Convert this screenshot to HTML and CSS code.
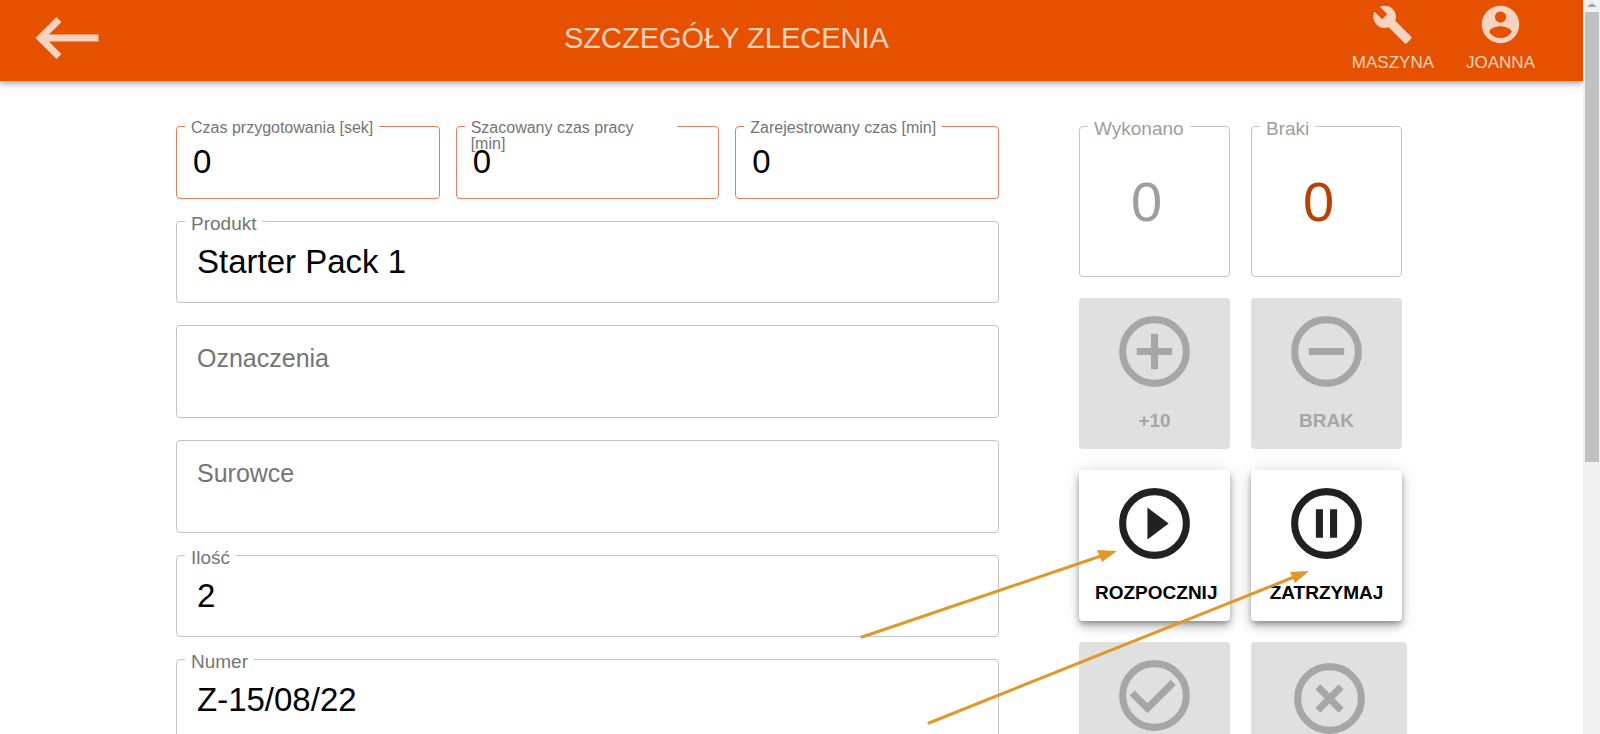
FILE: index.html
```html
<!DOCTYPE html>
<html lang="pl">
<head>
    <meta charset="UTF-8">
    <meta name="viewport" content="width=device-width, initial-scale=1.0">
    <title>Szczegóły zlecenia</title>
    <link rel="stylesheet" href="styles.css">
</head>
<body>
    <div class="window">
        <div class="page">
            <header class="topbar">
                <button type="button" class="back-button" aria-label="Wstecz">
                    <svg class="back-icon" viewBox="0 0 24 24"><path d="M21 11H6.83l3.58-3.59L9 6l-6 6 6 6 1.41-1.41L6.83 13H21z"/></svg>
                </button>
                <h1 class="title">Szczegóły zlecenia</h1>
                <nav class="topbar-actions">
                    <button type="button" class="topbar-button">
                        <svg class="topbar-icon" viewBox="-1 -1 26 26"><path d="M22.7 19l-9.1-9.1c.9-2.3.4-5-1.5-6.9-2-2-5-2.4-7.4-1.3L9 6 6 9 1.6 4.7C.4 7.1.9 10.1 2.9 12.1c1.9 1.9 4.6 2.4 6.9 1.5l9.1 9.1c.4.4 1 .4 1.4 0l2.3-2.3c.5-.4.5-1.1.1-1.4z"/></svg>
                        Maszyna
                    </button>
                    <button type="button" class="topbar-button">
                        <svg class="topbar-icon" viewBox="0 0 24 24"><path fill-rule="evenodd" d="M12 2a10 10 0 1 0 0 20 10 10 0 0 0 0-20zm0 3a3 3 0 1 1 0 6 3 3 0 0 1 0-6zm0 14.2a7.2 7.2 0 0 1-6-3.22c.03-1.99 4-3.08 6-3.08s5.97 1.09 6 3.08a7.2 7.2 0 0 1-6 3.22z"/></svg>
                        Joanna
                    </button>
                </nav>
            </header>

            <main class="order">
                <form class="details">
                    <div class="times">
                        <div class="field field-time">
                            <label for="prepTime">Czas przygotowania [sek]</label>
                            <input type="text" id="prepTime" value="0" readonly>
                        </div>
                        <div class="field field-time">
                            <label for="estimatedTime">Szacowany czas pracy [min]</label>
                            <input type="text" id="estimatedTime" value="0" readonly>
                        </div>
                        <div class="field field-time">
                            <label for="registeredTime">Zarejestrowany czas [min]</label>
                            <input type="text" id="registeredTime" value="0" readonly>
                        </div>
                    </div>
                    <div class="field">
                        <label for="product">Produkt</label>
                        <input type="text" id="product" value="Starter Pack 1" readonly>
                    </div>
                    <div class="field field-empty">
                        <label for="marks">Oznaczenia</label>
                        <textarea id="marks" readonly></textarea>
                    </div>
                    <div class="field field-empty">
                        <label for="materials">Surowce</label>
                        <textarea id="materials" readonly></textarea>
                    </div>
                    <div class="field">
                        <label for="amount">Ilość</label>
                        <input type="text" id="amount" value="2" readonly>
                    </div>
                    <div class="field">
                        <label for="number">Numer</label>
                        <input type="text" id="number" value="Z-15/08/22" readonly>
                    </div>
                </form>

                <section class="controls">
                    <div class="field field-count">
                        <label for="done">Wykonano</label>
                        <input type="text" id="done" value="0" disabled>
                    </div>
                    <div class="field field-count field-missing">
                        <label for="missing">Braki</label>
                        <input type="text" id="missing" value="0" disabled>
                    </div>

                    <button type="button" class="tile" disabled>
                        <svg class="tile-icon" viewBox="0 0 24 24"><circle class="ring" cx="12" cy="12" r="9"/><path d="M13 7h-2v4H7v2h4v4h2v-4h4v-2h-4z"/></svg>
                        <span class="tile-label">+10</span>
                    </button>
                    <button type="button" class="tile" disabled>
                        <svg class="tile-icon" viewBox="0 0 24 24"><circle class="ring" cx="12" cy="12" r="9"/><path d="M7 11v2h10v-2z"/></svg>
                        <span class="tile-label">Brak</span>
                    </button>

                    <button type="button" class="tile">
                        <svg class="tile-icon" viewBox="0 0 24 24"><circle class="ring" cx="12" cy="12" r="9"/><path d="M10 16.5l6-4.5-6-4.5z"/></svg>
                        <span class="tile-label">Rozpocznij</span>
                    </button>
                    <button type="button" class="tile">
                        <svg class="tile-icon" viewBox="0 0 24 24"><circle class="ring" cx="12" cy="12" r="9"/><path d="M9 16h2V8H9zm4-8v8h2V8z"/></svg>
                        <span class="tile-label">Zatrzymaj</span>
                    </button>

                    <button type="button" class="tile" aria-label="Zakończ" disabled>
                        <svg class="tile-icon" viewBox="0 0 24 24"><circle class="ring" cx="12" cy="12" r="9"/><path d="M16.59 7.58L10 14.17l-3.59-3.58L5 12l5 5 8-8z"/></svg>
                        <span class="tile-label"></span>
                    </button>
                    <button type="button" class="tile tile-large" aria-label="Anuluj" disabled>
                        <svg class="tile-icon" viewBox="0 0 24 24"><circle class="ring" cx="12" cy="12" r="9"/><path d="M14.59 8L12 10.59 9.41 8 8 9.41 10.59 12 8 14.59 9.41 16 12 13.41 14.59 16 16 14.59 13.41 12 16 9.41z"/></svg>
                        <span class="tile-label"></span>
                    </button>
                </section>
            </main>

            <!-- arrows pointing at the start and stop buttons -->
            <svg class="hints" width="1583" height="734" viewBox="0 0 1583 734" aria-hidden="true">
                <path class="hint-line" d="M862 637L1101 556M929 723L1294 577"/>
                <path class="hint-head" d="M1117 551l-20-1 5 12zM1309 571l-19 1 5 11z"/>
            </svg>
        </div>

        <div class="scrollbar" aria-hidden="true">
            <svg class="scroll-arrow" viewBox="0 0 14 12"><path d="M7 3l4 3v1H3V6z"/></svg>
            <div class="scroll-thumb"></div>
        </div>
    </div>
</body>
</html>
```

FILE: styles.css
```css
* {
    box-sizing: border-box;
}
body {
    margin: 0;
    background-color: white;
    color: black;
    font-family: "Liberation Sans", Arial, sans-serif;
}
button, input, textarea {
    font-family: inherit;
}
.window {
    display: flex;
    height: 100vh;
    overflow: hidden;
}
.page {
    position: relative;
    flex: 1;
    min-width: 0;
    overflow: hidden;
}

/* top bar */
.topbar {
    display: flex;
    justify-content: space-between;
    align-items: center;
    height: 81px;
    padding: 0 48px 6px 25px;
    background-color: #E65100;
    color: rgba(255, 255, 255, 0.75);
    box-shadow: 0 2px 4px -1px rgba(0, 0, 0, 0.2), 0 4px 5px rgba(0, 0, 0, 0.14), 0 1px 10px rgba(0, 0, 0, 0.12);
}
.back-button, .topbar-button {
    border: none;
    padding: 0;
    background: none;
    color: inherit;
    cursor: pointer;
}
.back-icon {
    display: block;
    width: 84px;
    height: 84px;
    fill: #F9D3BF;
}
.title {
    margin: 0;
    font-size: 29px;
    font-weight: normal;
    line-height: 34px;
    text-transform: uppercase;
}
.topbar-actions {
    display: flex;
    gap: 32px;
    padding-left: 8px;
}
.topbar-button {
    display: flex;
    flex-direction: column;
    align-items: center;
    gap: 6px;
    font-size: 17px;
    line-height: 20px;
    text-transform: uppercase;
}
.topbar-icon {
    width: 45px;
    height: 45px;
    fill: #F9D3BF;
}

/* order form */
.order {
    display: grid;
    grid-template-columns: minmax(0, 1fr) 328px;
    align-items: start;
    gap: 80px;
    padding: 45px 176px;
}
.details {
    display: flex;
    flex-direction: column;
    gap: 22px;
}
.times {
    display: grid;
    grid-template-columns: repeat(3, 1fr);
    gap: 16px;
}
.field {
    position: relative;
    border: 1px solid #C4C4C4;
    border-radius: 4px;
}
.field label {
    position: absolute;
    top: -9px;
    left: 8px;
    padding: 0 6px;
    background-color: white;
    color: #757575;
    font-size: 19px;
    line-height: 22px;
}
.field input, .field textarea {
    position: relative;
    display: block;
    width: 100%;
    border: none;
    outline: none;
    background: transparent;
    color: black;
    font-size: 33px;
    resize: none;
}
.field input {
    height: 80px;
    padding: 21px 20px;
}
.field-time {
    border-color: #EC7A5C;
}
.field-time label {
    top: -7px;
    max-width: 212px;
    font-size: 16px;
    line-height: 16px;
}
.field-time input {
    height: 71px;
    padding: 16px 16px 17px;
}
.field-empty label {
    top: 18px;
    left: 14px;
    font-size: 25px;
    line-height: 28px;
}
.field-empty textarea {
    height: 91px;
    padding: 20px;
}

/* counters and action tiles */
.controls {
    display: grid;
    grid-template-columns: 151px 151px;
    gap: 21px;
}
.field-count label {
    color: #9E9E9E;
}
.field-count input {
    height: 149px;
    padding: 0 16px 0 0;
    color: #9E9E9E;
    font-size: 56px;
    text-align: center;
}
.field-missing input {
    color: #B74207;
}
.tile {
    display: flex;
    flex-direction: column;
    justify-content: center;
    align-items: center;
    width: 151px;
    height: 151px;
    padding: 0 16px;
    border: none;
    border-radius: 4px;
    background-color: white;
    color: black;
    cursor: pointer;
    box-shadow: 0 3px 5px -1px rgba(0, 0, 0, 0.3), 0 6px 10px rgba(0, 0, 0, 0.2), 0 1px 18px rgba(0, 0, 0, 0.12);
}
.tile:disabled {
    background-color: #E0E0E0;
    color: #A6A6A6;
    cursor: default;
    box-shadow: none;
}
.tile-large {
    width: 156px;
    height: 156px;
}
.tile-icon {
    flex: none;
    width: 85px;
    height: 85px;
    fill: #212121;
    stroke: #212121;
    stroke-width: 0;
}
.tile:disabled .tile-icon {
    fill: #A6A6A6;
    stroke: #A6A6A6;
}
.tile-icon .ring {
    fill: none;
    stroke-width: 2;
}
.tile-label {
    width: 100%;
    height: 22px;
    margin: 16px 0 6px;
    font-size: 19px;
    font-weight: bold;
    line-height: 22px;
    text-align: center;
    text-transform: uppercase;
}

.hints {
    position: absolute;
    top: 0;
    left: 0;
    pointer-events: none;
}
.hint-line {
    fill: none;
    stroke: #E0982B;
    stroke-width: 3;
    stroke-linecap: round;
}
.hint-head {
    fill: #E0982B;
}

/* scrollbar */
.scrollbar {
    flex: none;
    width: 17px;
    padding: 0 1px 0 2px;
    background-color: #F1F1F1;
}
.scroll-arrow {
    display: block;
    width: 14px;
    height: 12px;
    fill: #A3A3A3;
}
.scroll-thumb {
    height: 450px;
    background-color: #C1C1C1;
}
```
